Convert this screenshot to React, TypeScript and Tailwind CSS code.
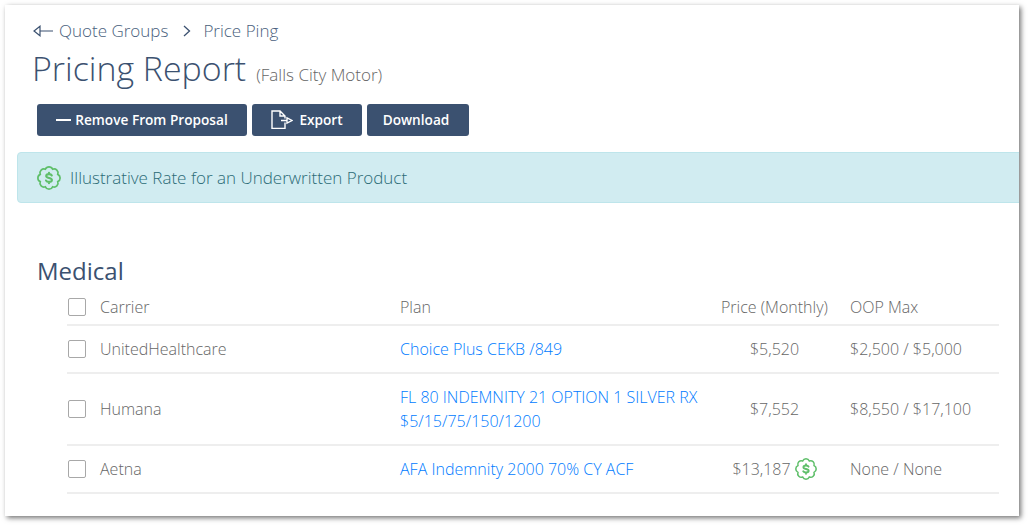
import React from "react";

const font = { fontFamily: '"Open Sans", sans-serif' };

const BadgeIcon = ({ className }: { className: string }) => (
  <svg viewBox="0 0 24 24" fill="none" stroke="#5fbf6a" strokeWidth="1.700" className={className}>
    <path d="M15.64 3.220A4 4 0 0 1 20.780 8.360A4 4 0 0 1 20.780 15.640A4 4 0 0 1 15.640 20.780A4 4 0 0 1 8.360 20.780A4 4 0 0 1 3.220 15.640A4 4 0 0 1 3.220 8.360A4 4 0 0 1 8.360 3.220A4 4 0 0 1 15.640 3.220Z" />
    <path strokeWidth="2.100" strokeLinecap="round" d="M14.800 9.500c-.4-.9-1.500-1.400-2.800-1.400-1.600 0-2.800.8-2.800 1.900 0 2.700 5.700 1.300 5.700 4 0 1.100-1.200 1.900-2.900 1.900-1.400 0-2.500-.5-3-1.400M12 6.700v1.400M12 15.900v1.400" />
  </svg>
);

const rows = [
  { carrier: "UnitedHealthcare", plan: ["Choice Plus CEKB /849"], price: "$5,520", oop: "$2,500 / $5,000", h: "h-[48px]" },
  { carrier: "Humana", plan: ["FL 80 INDEMNITY 21 OPTION 1 SILVER RX", "$5/15/75/150/1200"], price: "$7,552", oop: "$8,550 / $17,100", h: "h-[72px]" },
  { carrier: "Aetna", plan: ["AFA Indemnity 2000 70% CY ACF"], price: "$13,187", oop: "None / None", badge: true, h: "h-[48px]" },
];

const Checkbox = () => <span className="block w-[18px] h-[18px] shrink-0 border border-[#a8a8a8] rounded-[2px] bg-white" />;

const App = () => {
  return (
    <div className="w-[1028px] h-[525px] bg-white pl-[5px] pt-[5px]" style={font}>
      <div className="w-[1014px] h-[511px] bg-white overflow-hidden shadow-[2px_2px_5px_rgba(0,0,0,0.55)]">
        <div className="pl-[28px] pt-[14px] flex items-center h-[38px] text-[17px] font-light text-[#4a5f7d]">
          <svg viewBox="0 0 20 12" className="w-[20px] h-[12px] mr-[6px]" fill="none" stroke="#3b5170" strokeWidth="1.200">
            <path d="M7 1.200 1 6l6 4.800V1.200ZM7 6h13" />
          </svg>
          <span>Quote Groups</span>
          <svg viewBox="0 0 10 12" className="w-[10px] h-[12px] ml-[14px] mr-[11px]" fill="none" stroke="#3b5170" strokeWidth="1.300">
            <path d="M2 1l5.500 5L2 11" />
          </svg>
          <span>Price Ping</span>
        </div>

        <div className="pl-[27px] mt-[3px] flex items-baseline h-[44px]">
          <h1 className="text-[33.900px] leading-[44px] font-light text-[#3b5170]">Pricing Report</h1>
          <span className="ml-[10px] text-[17px] font-light text-[#666]">(Falls City Motor)</span>
        </div>

        <div className="pl-[32px] mt-[14px] flex gap-[5px] h-[32px]">
          <button className="w-[210px] bg-[#3b5170] rounded-[3px] text-white text-[13.650px] font-semibold flex items-center justify-center">
            <span className="w-[15px] h-[2px] bg-white mr-[4px]" />
            Remove From Proposal
          </button>
          <button className="w-[110px] bg-[#3b5170] rounded-[3px] text-white text-[13.650px] font-semibold flex items-center justify-center">
            <svg viewBox="0 0 22 20" className="w-[22px] h-[20px] mr-[6px]" fill="none" stroke="#fff" strokeWidth="1.400">
              <path d="M14 12.500v5.900H1V1h8l5 5v2.500M9 1v5h5M10 10.500h6M16 7.800l5 2.700-5 2.700v-5.400Z" />
            </svg>
            Export
          </button>
          <button className="w-[102px] pr-[4px] bg-[#3b5170] rounded-[3px] text-white text-[13.650px] font-semibold flex items-center justify-center">
            Download
          </button>
        </div>

        <div className="ml-[12px] mt-[16px] w-[1020px] h-[51px] bg-[#d1ecf1] border border-[#bee5eb] rounded-[4px] flex items-center pl-[19px]">
          <BadgeIcon className="w-[24px] h-[24px] mr-[9px]" />
          <span className="text-[17px] font-light text-[#2b6b76]">Illustrative Rate for an Underwritten Product</span>
        </div>

        <h2 className="ml-[32px] mt-[51px] h-[33px] text-[24px] leading-[33px] font-normal text-[#3b5170]">Medical</h2>

        <div className="ml-[62px] mt-px w-[932px] text-[16px] font-light text-[#666]">
          <div className="h-[38px] pt-[2px] flex items-center border-b-2 border-[#eeeeee]">
            <div className="w-[333px] flex items-center pl-px">
              <Checkbox />
              <span className="ml-[14px]">Carrier</span>
            </div>
            <div className="w-[321px]">Plan</div>
            <div className="w-[129px]">Price (Monthly)</div>
            <div>OOP Max</div>
          </div>
          {rows.map((r) => (
            <div key={r.carrier} className={`${r.h} flex items-center border-b-2 border-[#eeeeee]`}>
              <div className="w-[333px] flex items-center pl-px">
                <Checkbox />
                <span className="ml-[14px]">{r.carrier}</span>
              </div>
              <div className="w-[321px] text-[#007bff] leading-[24px]">
                {r.plan.map((p) => (
                  <div key={p}>{p}</div>
                ))}
              </div>
              <div className="w-[107px] flex items-center justify-center">
                {r.price}
                {r.badge && <BadgeIcon className="w-[22px] h-[22px] ml-[4px]" />}
              </div>
              <div className="ml-[22px]">{r.oop}</div>
            </div>
          ))}
        </div>
      </div>
    </div>
  );
};

export default App;
